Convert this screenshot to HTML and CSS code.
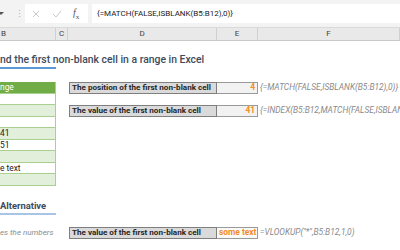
FILE: index.html
```html
<!DOCTYPE html>
<html lang="en">
  <head>
    <meta charset="UTF-8" />
    <title>First non-blank cell</title>
    <link rel="stylesheet" href="styles.css">
  </head>
  <body>
    <div class="ribbon">
      <div class="name-box"><span class="name-arrow"></span></div>
      <span class="grip">&#8942;</span>
      <div class="buttons">
        <svg class="btn-x" width="8" height="8" viewBox="0 0 8 8"><path d="M1 1L7 7M7 1L1 7" stroke="#c8c8c8" stroke-width="1"/></svg>
        <svg class="btn-ok" width="10" height="8" viewBox="0 0 10 8"><path d="M1 4L4 7L9 1" stroke="#c8c8c8" stroke-width="1" fill="none"/></svg>
        <span class="fx"><i>f</i><sub>x</sub></span>
      </div>
      <div class="formula-bar">{=MATCH(FALSE,ISBLANK(B5:B12),0)}</div>
    </div>

    <div class="row heads">
      <div>B</div>
      <div>C</div>
      <div>D</div>
      <div>E</div>
      <div>F</div>
    </div>

    <div class="sheet">
      <div class="row r12"></div>
      <div class="row r15">
        <div class="title">nd the first non-blank cell in a range in Excel</div>
      </div>
      <div class="row r14"></div>

      <div class="row">
        <div class="tbl head">nge</div><div></div>
        <div class="lbl">The position of the first non-blank cell</div>
        <div class="val">4</div>
        <div class="fml">{=MATCH(FALSE,ISBLANK(B5:B12),0)}</div>
      </div>
      <div class="row"><div class="tbl"></div></div>
      <div class="row">
        <div class="tbl alt"></div><div></div>
        <div class="lbl">The value of the first non-blank cell</div>
        <div class="val">41</div>
        <div class="fml">{=INDEX(B5:B12,MATCH(FALSE,ISBLANK(</div>
      </div>
      <div class="row"><div class="tbl"></div></div>
      <div class="row"><div class="tbl alt">41</div></div>
      <div class="row"><div class="tbl">51</div></div>
      <div class="row"><div class="tbl alt"></div></div>
      <div class="row"><div class="tbl">e text</div></div>
      <div class="row"><div class="tbl alt"></div></div>

      <div class="row r12"></div>
      <div class="row r17">
        <div class="subtitle">Alternative</div>
      </div>
      <div class="row r12"></div>
      <div class="row r12">
        <div class="note">es the numbers</div><div></div>
        <div class="lbl">The value of the first non-blank cell</div>
        <div class="val left">some text</div>
        <div class="fml">=VLOOKUP("*",B5:B12,1,0)</div>
      </div>
      <div class="row r12"></div>
    </div>
  </body>
</html>
```

FILE: styles.css
```css
body {
  margin: 0;
  width: 400px;
  height: 250px;
  overflow: hidden;
  background: #ffffff;
  font-family: Roboto, "Liberation Sans", sans-serif;
  color: #222;
}

.ribbon {
  height: 27px;
  background: #f3f3f3;
  border-bottom: 1px solid #dadada;
  display: flex;
  align-items: center;
}

.name-box {
  width: 13px;
  display: flex;
  align-items: center;
}

.name-arrow {
  width: 0;
  height: 0;
  border-left: 3px solid transparent;
  border-right: 3px solid transparent;
  border-top: 3px solid #555;
  margin-left: -2px;
}

.grip {
  width: 12px;
  text-align: center;
  color: #b0b0b0;
  font-size: 9px;
}

.buttons {
  width: 63px;
  height: 19px;
  background: #fff;
  display: flex;
  align-items: center;
}

.btn-x {
  margin-left: 7px;
}

.btn-ok {
  margin-left: 12px;
}

.fx {
  margin-left: 11px;
  font-family: "Liberation Serif", serif;
  font-size: 10px;
  color: #555;
}

.fx sub {
  font-size: 7px;
}

.formula-bar {
  margin-left: 4px;
  flex: 1;
  height: 19px;
  background: #fff;
  font-size: 8px;
  line-height: 19px;
  padding-left: 5px;
  color: #222;
  white-space: nowrap;
}

.row {
  display: grid;
  grid-template-columns: 56px 12px 149px 41px 1fr;
  height: 11.5px;
}

.row > div {
  white-space: nowrap;
}

.heads {
  height: 12px;
  background: #e9e9e9;
  border-bottom: 1px solid #c8c8c8;
  font-size: 8px;
  color: #444;
  line-height: 12px;
  text-align: center;
}

.heads > div {
  border-right: 1px solid #d0d0d0;
}

.heads > div:first-child {
  text-align: left;
  padding-left: 1px;
}

.r12 { height: 12px; }
.r14 { height: 14px; }
.r15 { height: 15px; }
.r17 { height: 17px; }

.title {
  font-size: 10.4px;
  font-weight: 500;
  color: #3d4b5c;
  line-height: 14px;
  border-bottom: 2px solid #5b9bd5;
}

.subtitle {
  font-size: 9.4px;
  font-weight: bold;
  color: #3d4b5c;
  line-height: 15px;
  border-bottom: 2px solid #a9c4e6;
}

.tbl {
  font-size: 8.4px;
  line-height: 10.5px;
  border-right: 1px solid #a9d08e;
  border-bottom: 1px solid #a9d08e;
  color: #222;
}

.tbl.alt {
  background: #e2efda;
}

.tbl.head {
  background: #70ad47;
  color: #fff;
}

.lbl {
  margin-left: 1px;
  background: #dadada;
  border: 1px solid #7f7f7f;
  font-size: 8.1px;
  font-weight: bold;
  line-height: 9.5px;
  padding-left: 2px;
  color: #262626;
}

.val {
  background: #f2f2f2;
  border: 1px solid #9a9a9a;
  border-left: none;
  color: #f28c28;
  font-size: 8.4px;
  font-weight: bold;
  line-height: 9.5px;
  text-align: right;
  padding-right: 2px;
}

.val.left {
  text-align: left;
  padding-left: 2px;
  background: #fafafa;
}

.fml {
  font-size: 8.4px;
  font-style: italic;
  color: #8a8a8a;
  line-height: 11.5px;
  padding-left: 2px;
}

.note {
  font-size: 8px;
  font-style: italic;
  color: #8a8a8a;
  line-height: 12px;
}
```
